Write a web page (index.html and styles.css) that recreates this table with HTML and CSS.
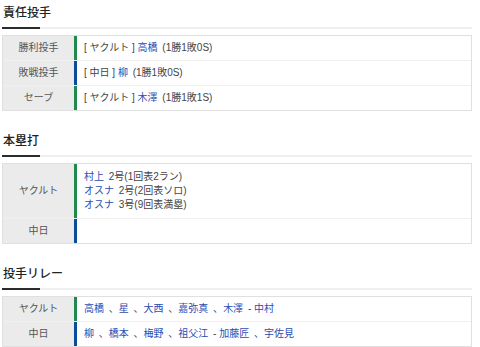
FILE: index.html
```html
<!DOCTYPE html>
<html lang="ja">
<head>
<meta charset="utf-8">
<link rel="stylesheet" href="styles.css">
</head>
<body>
<div class="page">
  <section class="sec">
    <h2 class="sec-head">責任投手</h2>
    <div class="tbl">
      <div class="row">
        <div class="lbl">勝利投手</div>
        <div class="val bar-s">[ ヤクルト ] <a class="lk">高橋</a> (1勝1敗0S)</div>
      </div>
      <div class="row">
        <div class="lbl">敗戦投手</div>
        <div class="val bar-d">[ 中日 ] <a class="lk">柳</a> (1勝1敗0S)</div>
      </div>
      <div class="row">
        <div class="lbl">セーブ</div>
        <div class="val bar-s">[ ヤクルト ] <a class="lk">木澤</a> (1勝1敗1S)</div>
      </div>
    </div>
  </section>

  <section class="sec">
    <h2 class="sec-head">本塁打</h2>
    <div class="tbl">
      <div class="row">
        <div class="lbl">ヤクルト</div>
        <div class="val bar-s multi">
          <div><a class="lk">村上</a> 2号(1回表2ラン)</div>
          <div><a class="lk">オスナ</a> 2号(2回表ソロ)</div>
          <div><a class="lk">オスナ</a> 3号(9回表満塁)</div>
        </div>
      </div>
      <div class="row">
        <div class="lbl">中日</div>
        <div class="val bar-d"></div>
      </div>
    </div>
  </section>

  <section class="sec">
    <h2 class="sec-head">投手リレー</h2>
    <div class="tbl">
      <div class="row">
        <div class="lbl">ヤクルト</div>
        <div class="val bar-s"><a class="lk">高橋</a> 、<a class="lk">星</a> 、<a class="lk">大西</a> 、<a class="lk">嘉弥真</a> 、<a class="lk">木澤</a> - <a class="lk">中村</a></div>
      </div>
      <div class="row">
        <div class="lbl">中日</div>
        <div class="val bar-d"><a class="lk">柳</a> 、<a class="lk">橋本</a> 、<a class="lk">梅野</a> 、<a class="lk">祖父江</a> - <a class="lk">加藤匠</a> 、<a class="lk">宇佐見</a></div>
      </div>
    </div>
  </section>
</div>
</body>
</html>
```

FILE: styles.css
```css
html, body {
  margin: 0;
  padding: 0;
  background: #fff;
}

.page {
  width: 470px;
  margin-left: 2px;
  font-family: "Liberation Sans", "Noto Sans CJK JP", sans-serif;
  color: #333;
  display: flex;
  flex-direction: column;
  gap: 17px;
}

.sec {
  display: flex;
  flex-direction: column;
  gap: 6px;
}

.sec-head {
  margin: 0;
  padding: 5px 0 7px 1px;
  font-size: 12px;
  line-height: 17px;
  font-weight: 500;
  color: #222;
  background:
    linear-gradient(#2b2b2b, #2b2b2b) 0 100% / 38px 2px no-repeat,
    linear-gradient(#efefef, #efefef) 0 100% / 100% 2px no-repeat;
}

.tbl {
  border: 1px solid #e0e0e0;
  display: flex;
  flex-direction: column;
  font-size: 10px;
  line-height: 14px;
}

.row {
  display: flex;
}

.row + .row {
  border-top: 1px solid #f0f0f0;
}

.lbl {
  width: 71px;
  flex: none;
  background: #ebebeb;
  color: #555;
  display: flex;
  align-items: center;
  justify-content: center;
}

.val {
  flex: 1;
  padding: 5px 0 5px 7px;
  min-height: 14px;
  color: #444;
}

.val.multi {
  padding: 6px 0 6px 7px;
}

.bar-s {
  border-left: 3px solid #1f8a4c;
}

.bar-d {
  border-left: 3px solid #0c4d9b;
}

.lk {
  color: #2a4db3;
  text-decoration: none;
  margin-right: 2px;
}
```
